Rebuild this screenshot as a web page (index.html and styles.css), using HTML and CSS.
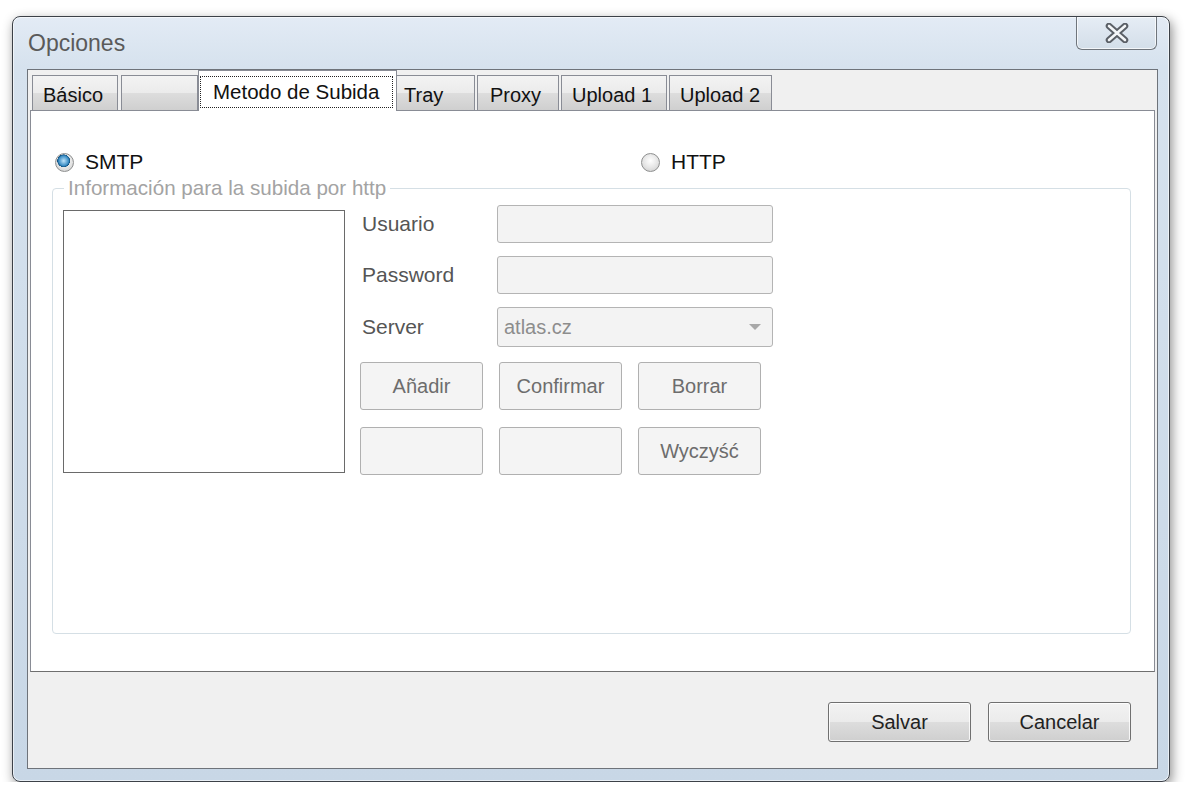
FILE: index.html
```html
<!DOCTYPE html>
<html lang="es">
<head>
    <meta charset="UTF-8">
    <meta name="viewport" content="width=device-width, initial-scale=1.0">
    <title>Opciones</title>
    <link rel="stylesheet" href="styles.css">
</head>
<body>
    <div class="window">
        <div class="titlebar">
            <span class="title">Opciones</span>
            <button class="close-btn" aria-label="Cerrar">
                <svg width="24" height="20" viewBox="0 0 24 20">
                    <path d="M4 3 L20 17 M20 3 L4 17" stroke="#5a5f66" stroke-width="6.5" stroke-linecap="round" fill="none"/>
                    <path d="M4 3 L20 17 M20 3 L4 17" stroke="#f4f6f8" stroke-width="2.6" stroke-linecap="round" fill="none"/>
                </svg>
            </button>
        </div>

        <div class="client">
            <div class="tabs">
                <div class="tab tab-basico">Básico</div>
                <div class="tab tab-blank"></div>
                <div class="tab tab-active"><span class="focus">Metodo de Subida</span></div>
                <div class="tab tab-tray">Tray</div>
                <div class="tab tab-proxy">Proxy</div>
                <div class="tab tab-up1">Upload 1</div>
                <div class="tab tab-up2">Upload 2</div>
            </div>

            <div class="panel">
                <div class="radio-row">
                    <label class="radio radio-smtp"><span class="radio-dot checked"></span>SMTP</label>
                    <label class="radio"><span class="radio-dot"></span>HTTP</label>
                </div>

                <fieldset class="group">
                    <legend>Información para la subida por http</legend>
                    <div class="group-body">
                        <div class="listbox"></div>
                        <div class="form">
                            <div class="form-grid">
                                <span class="field-label">Usuario</span>
                                <div class="field"></div>
                                <span class="field-label">Password</span>
                                <div class="field"></div>
                                <span class="field-label">Server</span>
                                <div class="field field-select">
                                    <span>atlas.cz</span>
                                    <svg width="14" height="8" viewBox="0 0 14 8"><path d="M1 1 L13 1 L7 7 Z" fill="#a8a8a8"/></svg>
                                </div>
                            </div>
                            <div class="btn-grid">
                                <button class="btn">Añadir</button>
                                <button class="btn">Confirmar</button>
                                <button class="btn">Borrar</button>
                                <button class="btn"></button>
                                <button class="btn"></button>
                                <button class="btn">Wyczyść</button>
                            </div>
                        </div>
                    </div>
                </fieldset>
            </div>

            <div class="footer">
                <button class="btn-main">Salvar</button>
                <button class="btn-main">Cancelar</button>
            </div>
        </div>
    </div>
</body>
</html>
```

FILE: styles.css
```css
body {
    margin: 0;
    background: #fff;
    font-family: "Liberation Sans", Arial, sans-serif;
}
.window {
    box-sizing: border-box;
    width: 1158px;
    height: 766px;
    margin: 16px 0 0 12px;
    padding: 0 11px 12px 14px;
    border: 1px solid #3c4148;
    border-radius: 8px;
    background: linear-gradient(to bottom, #e3ebf5 0, #d6e2ee 50px, #c8d7e6 100%);
    box-shadow: inset 0 0 0 1px rgba(255, 255, 255, 0.6), 2px 4px 12px rgba(0, 0, 0, 0.45);
    display: flex;
    flex-direction: column;
}
.titlebar {
    height: 52px;
    display: flex;
    justify-content: space-between;
    align-items: flex-start;
}
.title {
    padding: 13px 0 0 1px;
    font-size: 23px;
    line-height: 26px;
    color: #5a5a5a;
}
.close-btn {
    width: 81px;
    height: 33px;
    margin-right: 1px;
    padding: 0;
    border: 1px solid #6f757c;
    border-top: none;
    border-radius: 0 0 6px 6px;
    background: linear-gradient(to bottom, #e6edf5, #d3dee9);
    box-shadow: inset 0 0 0 1px rgba(255, 255, 255, 0.7);
    display: flex;
    align-items: center;
    justify-content: center;
}
.client {
    flex: 1;
    border: 1px solid #6e737a;
    background: #f0f0f0;
    display: flex;
    flex-direction: column;
}
.tabs {
    height: 40px;
    padding-left: 4px;
    display: flex;
    align-items: flex-end;
    gap: 2px;
}
.tab {
    box-sizing: border-box;
    height: 35px;
    padding: 3px 10px 0;
    border: 1px solid #898c95;
    border-bottom: none;
    background: linear-gradient(to bottom, #f3f3f3 0, #ebebeb 50%, #dddddd 51%, #cfcfcf 100%);
    font-size: 20px;
    line-height: 32px;
    color: #111;
    white-space: nowrap;
}
.tab-basico { width: 86px; }
.tab-blank { width: 77px; margin-left: 1px; }
.tab-tray { width: 80px; padding-left: 8px; }
.tab-proxy { width: 82px; padding-left: 12px; }
.tab-up1 { width: 106px; padding-left: 10px; }
.tab-up2 { width: 103px; padding-left: 10px; }
.tab-active {
    position: relative;
    z-index: 1;
    width: 199px;
    height: 41px;
    margin: 0 -4px -1px -2px;
    padding: 5px 3px 0 1px;
    background: #fff;
    font-size: 20.5px;
    line-height: 30px;
}
.focus {
    display: block;
    height: 32px;
    box-sizing: border-box;
    padding: 0 8px 0 12px;
    border: 1px dotted #222;
}
.panel {
    height: 562px;
    box-sizing: border-box;
    margin: 0 2px;
    border: 1px solid #898c95;
    border-bottom-color: #6f6f6f;
    background: #fff;
}
.radio-row {
    display: flex;
    padding: 39px 0 0 24px;
}
.radio {
    display: flex;
    align-items: center;
    gap: 11px;
    font-size: 21px;
    line-height: 24px;
    color: #111;
}
.radio-smtp {
    width: 586px;
}
.radio-dot {
    box-sizing: border-box;
    width: 19px;
    height: 19px;
    border: 1px solid #8e8f8f;
    border-radius: 50%;
    background: radial-gradient(circle at 50% 40%, #ffffff 0, #e4e4e4 55%, #c8c8c8 100%);
}
.radio-dot.checked {
    background:
        radial-gradient(circle at 45% 40%, #bfe4fb 0, #3d8fc6 35%, #0d4f80 45%, transparent 47%),
        radial-gradient(circle at 50% 40%, #ffffff 0, #e4e4e4 55%, #c8c8c8 100%);
}
.group {
    box-sizing: border-box;
    height: 457px;
    margin: 3px 23px 0 21px;
    padding: 0 10px;
    border: 1px solid #d5dfe5;
    border-radius: 4px;
}
.group legend {
    margin-left: 1px;
    padding: 0 4px;
    font-size: 20.6px;
    line-height: 22px;
    color: #a3a3a3;
}
.group-body {
    display: flex;
    padding-top: 6px;
}
.listbox {
    box-sizing: border-box;
    width: 282px;
    height: 263px;
    margin-top: 5px;
    border: 1px solid #6a6a6a;
    background: #fff;
}
.form {
    margin-left: 15px;
}
.form-grid {
    display: grid;
    grid-template-columns: 137px 276px;
    grid-template-rows: 38px 38px 40px;
    row-gap: 13px;
    align-items: center;
}
.field-label {
    padding-left: 2px;
    font-size: 21px;
    color: #555;
}
.field {
    box-sizing: border-box;
    height: 100%;
    border: 1px solid #b4b4b4;
    border-radius: 3px;
    background: #f3f3f3;
}
.field-select {
    display: flex;
    align-items: center;
    justify-content: space-between;
    padding: 0 10px 0 6px;
    font-size: 20px;
    color: #8d8d8d;
}
.btn-grid {
    display: grid;
    grid-template-columns: repeat(3, 123px);
    grid-auto-rows: 48px;
    column-gap: 16px;
    row-gap: 17px;
    margin-top: 15px;
}
.btn {
    padding: 0;
    border: 1px solid #b0b0b0;
    border-radius: 3px;
    background: #f4f4f4;
    font-family: inherit;
    font-size: 20px;
    color: #6d6d6d;
}
.footer {
    flex: 1;
    display: flex;
    justify-content: flex-end;
    align-items: flex-start;
    gap: 17px;
    padding: 30px 26px 0 0;
}
.btn-main {
    width: 143px;
    height: 40px;
    padding: 0;
    border: 1px solid #707070;
    border-radius: 3px;
    background: linear-gradient(to bottom, #f2f2f2 0, #ebebeb 50%, #dddddd 51%, #cfcfcf 100%);
    box-shadow: inset 0 0 0 1px rgba(255, 255, 255, 0.8);
    font-family: inherit;
    font-size: 20px;
    color: #222;
}
```
